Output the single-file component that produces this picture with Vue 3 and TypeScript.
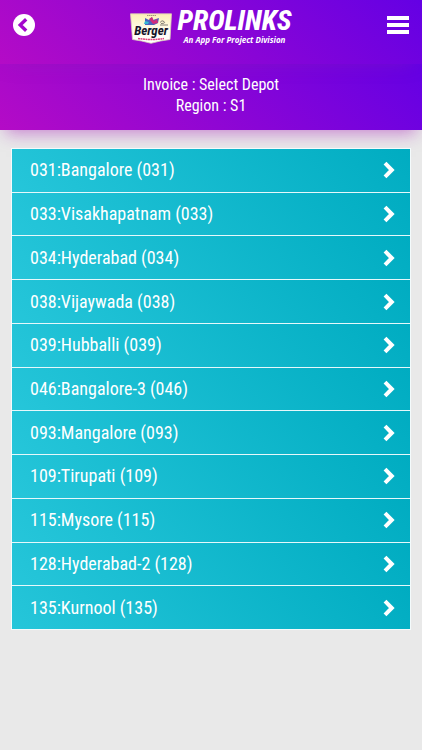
<script setup lang="ts">
interface Depot {
  code: string
  name: string
}

const depots: Depot[] = [
  { code: '031', name: 'Bangalore' },
  { code: '033', name: 'Visakhapatnam' },
  { code: '034', name: 'Hyderabad' },
  { code: '038', name: 'Vijaywada' },
  { code: '039', name: 'Hubballi' },
  { code: '046', name: 'Bangalore-3' },
  { code: '093', name: 'Mangalore' },
  { code: '109', name: 'Tirupati' },
  { code: '115', name: 'Mysore' },
  { code: '128', name: 'Hyderabad-2' },
  { code: '135', name: 'Kurnool' },
]
</script>

<template>
  <div class="page">
    <header class="navbar">
      <button class="icon-button" type="button" aria-label="Back">
        <svg width="22" height="22" viewBox="0 0 22 22">
          <circle cx="11" cy="11" r="11" fill="#fff" />
          <path d="M13.2 5.2 7.2 11l6 5.8" fill="none" stroke="#a307cd" stroke-width="3.4" />
        </svg>
      </button>
      <div class="brand">
        <svg class="badge" width="42" height="31" viewBox="0 0 42 31">
          <defs>
            <linearGradient id="badge-fill" x1="0" y1="0" x2="0" y2="1">
              <stop offset="0" stop-color="#fdf0b4" />
              <stop offset="0.6" stop-color="#fffdf4" />
              <stop offset="1" stop-color="#fff" />
            </linearGradient>
          </defs>
          <path d="M.5 .8H41.5L40 26.5Q31 27.500 21 30.300Q11 27.500 2.500 26.500Z" fill="url(#badge-fill)" stroke="#d9cbb8" stroke-width=".8" />
          <path d="M17 2.500H26" stroke="#8d8068" stroke-width=".8" stroke-dasharray="1.500 .5" />
          <path d="M15 5l4 2 3-3 1 3 6-2-1 5-4 2-9 0z" fill="#4b62bd" />
          <path d="M19 6l3-2 2 4 3-2 1 4-5 1z" fill="#d12c7c" />
          <path d="M15 8l4 1-1 2h-4z" fill="#35b8d4" />
          <path d="M30 9.500q2-3 4-1t-3 2M30 12H38" fill="none" stroke="#77716a" stroke-width=".9" />
          <text class="badge-name" x="21" y="22" text-anchor="middle">Berger</text>
          <path d="M8 25.500Q21 27.500 34 25.500" fill="none" stroke="#e0457e" stroke-width="1.500" stroke-dasharray="2 .5" />
        </svg>
        <div class="wordmark">
          <span class="title">PROLINKS</span>
          <span class="tagline">An App For Project Division</span>
        </div>
      </div>
      <button class="icon-button" type="button" aria-label="Menu">
        <svg width="22" height="20" viewBox="0 0 22 20">
          <path d="M0 3H22M0 10H22M0 17H22" stroke="#fff" stroke-width="4" />
        </svg>
      </button>
    </header>

    <section class="heading">
      <h1>Invoice : Select Depot</h1>
      <p>Region : S1</p>
    </section>

    <main class="content">
      <ul class="depots">
        <li v-for="depot in depots" :key="depot.code">
          <a class="depot" href="#">
            <span>{{ depot.code }}:{{ depot.name }} ({{ depot.code }})</span>
            <svg width="12" height="18" viewBox="0 0 12 18" aria-hidden="true">
              <path d="M2 2.2 8.8 9 2 15.8" fill="none" stroke="#fff" stroke-width="4" />
            </svg>
          </a>
        </li>
      </ul>
    </main>
  </div>
</template>

<style>
body {
  margin: 0;
  background: #e9e9e9;
}
</style>

<style scoped>
.page {
  font-family: 'Roboto Condensed', 'Liberation Sans Narrow', Roboto, sans-serif;
  color: #fff;
}

.navbar,
.heading {
  background: linear-gradient(45deg, #b40bc6, #6400e4);
}

.navbar {
  position: relative;
  display: flex;
  align-items: center;
  justify-content: space-between;
  height: 50px;
  padding: 0 13px 14px;
  box-shadow: 0 6px 20px -10px rgba(142, 36, 170, 0.5);
}

.icon-button {
  display: flex;
  padding: 0;
  border: 0;
  background: none;
  cursor: pointer;
}

.brand {
  display: flex;
  align-items: flex-end;
  gap: 5px;
}

.badge {
  padding-top: 6px;
}

.badge-name {
  font: italic 700 13px 'Roboto Condensed', Roboto, sans-serif;
  fill: #16142a;
}

.wordmark {
  display: flex;
  flex-direction: column;
  align-items: center;
  white-space: nowrap;
}

.title {
  font: italic 800 28px/24px 'Roboto Condensed', Roboto, sans-serif;
}

.tagline {
  padding-top: 3px;
  font: italic bold 8px/8px 'Open Sans', sans-serif;
}

.heading {
  padding: 10px 12px 14px;
  text-align: center;
  box-shadow: 0 9px 16px -6px rgba(170, 39, 186, 0.55);
}

.heading h1,
.heading p {
  margin: 0;
  font-size: 16px;
  font-weight: 400;
  line-height: 21px;
}

.content {
  padding: 18px 11px;
}

.depots {
  display: grid;
  grid-auto-rows: 1fr;
  gap: 1px;
  min-height: 64vh;
  margin: 0;
  padding: 0;
  border: 1px solid #f4fbfc;
  background: #e5f8fb;
  list-style: none;
}

.depots li {
  display: grid;
}

.depot {
  display: flex;
  align-items: center;
  justify-content: space-between;
  padding: 0 15px 0 18px;
  background: linear-gradient(45deg, #26c6da, #00acc1);
  color: #fff;
  font-size: 18px;
  line-height: 24px;
  text-decoration: none;
}
</style>
